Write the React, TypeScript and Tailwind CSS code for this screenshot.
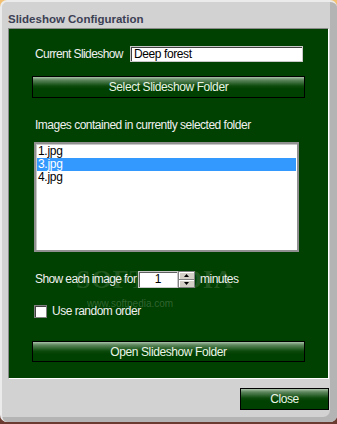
import React from "react";

const font = { fontFamily: '"Liberation Sans", Arial, sans-serif' };

function GreenButton({ label, className }: { label: string; className: string }) {
  return (
    <div
      className={`flex items-center justify-center border border-black bg-[linear-gradient(to_bottom,#a9c2a9_0px,#5d865d_3px,#0c4a0c_9px,#004000_12px)] text-[12px] tracking-[-0.4px] whitespace-nowrap text-[#eaf5e6] ${className}`}
    >
      {label}
    </div>
  );
}

export default function App() {
  return (
    <div className="w-[337px] h-[424px] bg-[linear-gradient(to_bottom,#f2c070,#d08050_50%,#6a3a30)]" style={font}>
      <div className="relative w-[337px] h-[422px] rounded-[7px] bg-[#d2d2d2] border-l-[2px] border-t-[2px] border-[#ebebeb] shadow-[inset_-7px_-5px_0_#b4b4b4,inset_-4px_-3px_0_#c4c4c4]">
        <div className="h-[26px] pl-[6px] pt-[10px] text-[11.5px] font-bold leading-[14px] text-[#3c4054] whitespace-nowrap">
          Slideshow Configuration
        </div>
        <div className="ml-[6px] w-[321px] h-[351px] border-t border-l border-[#8a8a8a] border-r border-b border-r-white border-b-white bg-[#004000] pl-[23px] text-[12px] text-[#f0f0f0]">
          <div className="mt-[17px] h-[16px] flex items-center">
            <div className="ml-[3px] w-[95px] shrink-0 whitespace-nowrap tracking-[-0.6px] leading-[16px]">Current Slideshow</div>
            <div className="w-[173px] h-[16px] shrink-0 bg-white border border-[#c8c8c8] shadow-[inset_1px_1px_0_#404040] pl-[3px] text-black leading-[14px] tracking-[-0.4px]">
              Deep forest
            </div>
          </div>
          <GreenButton label="Select Slideshow Folder" className="mt-[14px] w-[273px] h-[22px]" />
          <div className="mt-[20px] ml-[3px] h-[14px] leading-[14px] tracking-[-0.5px] whitespace-nowrap">
            Images contained in currently selected folder
          </div>
          <div className="mt-[10px] ml-[2px] w-[265px] h-[110px] bg-white border-2 border-[#909090] shadow-[inset_1px_1px_0_#c8c8c8] p-[1px] text-black leading-[13px] tracking-[-0.3px]">
            <div className="h-[13px] pl-[1px]">1.jpg</div>
            <div className="h-[13px] pl-[1px] bg-[#3399ff] text-white">3.jpg</div>
            <div className="h-[13px] pl-[1px]">4.jpg</div>
          </div>
          <div className="relative mt-[19px] h-[17px] flex items-center">
            <div className="absolute left-[44px] top-[-3px] text-[26px] font-bold leading-[24px] tracking-[1px] text-white/15 pointer-events-none whitespace-nowrap" style={{ fontFamily: '"Liberation Serif", serif' }}>
              SOFTPEDIA
            </div>
            <div className="absolute left-[55px] top-[27px] text-[10px] leading-[12px] text-white/20 pointer-events-none whitespace-nowrap">
              www.softpedia.com
            </div>
            <div className="relative ml-[3px] w-[103px] shrink-0 whitespace-nowrap tracking-[-0.6px] leading-[17px]">Show each image for</div>
            <div className="relative w-[40px] h-[17px] shrink-0 bg-white border border-[#c8c8c8] shadow-[inset_1px_1px_0_#606060] text-black text-center leading-[15px]">
              1
            </div>
            <div className="relative w-[17px] h-[17px] shrink-0 flex flex-col border border-[#808080] bg-[#d4d0c8]">
              <div className="flex-1 flex items-center justify-center border-b border-[#808080] shadow-[inset_1px_1px_0_#fff]">
                <svg width="5" height="3" viewBox="0 0 5 3"><path d="M2.5 0L5 3H0z" fill="#000" /></svg>
              </div>
              <div className="flex-1 flex items-center justify-center shadow-[inset_1px_1px_0_#fff]">
                <svg width="5" height="3" viewBox="0 0 5 3"><path d="M0 0h5L2.5 3z" fill="#000" /></svg>
              </div>
            </div>
            <div className="relative ml-[5px] whitespace-nowrap tracking-[-0.5px] leading-[17px]">minutes</div>
          </div>
          <div className="mt-[17px] h-[13px] flex items-center">
            <div className="ml-[2px] w-[13px] h-[13px] shrink-0 bg-white border border-[#808080] shadow-[inset_1px_1px_0_#404040]" />
            <div className="ml-[5px] leading-[13px] whitespace-nowrap tracking-[-0.5px]">Use random order</div>
          </div>
          <GreenButton label="Open Slideshow Folder" className="mt-[23px] w-[273px] h-[21px]" />
        </div>
        <div className="flex justify-end w-[327px] mt-[9px]">
          <GreenButton label="Close" className="w-[89px] h-[22px]" />
        </div>
      </div>
    </div>
  );
}
